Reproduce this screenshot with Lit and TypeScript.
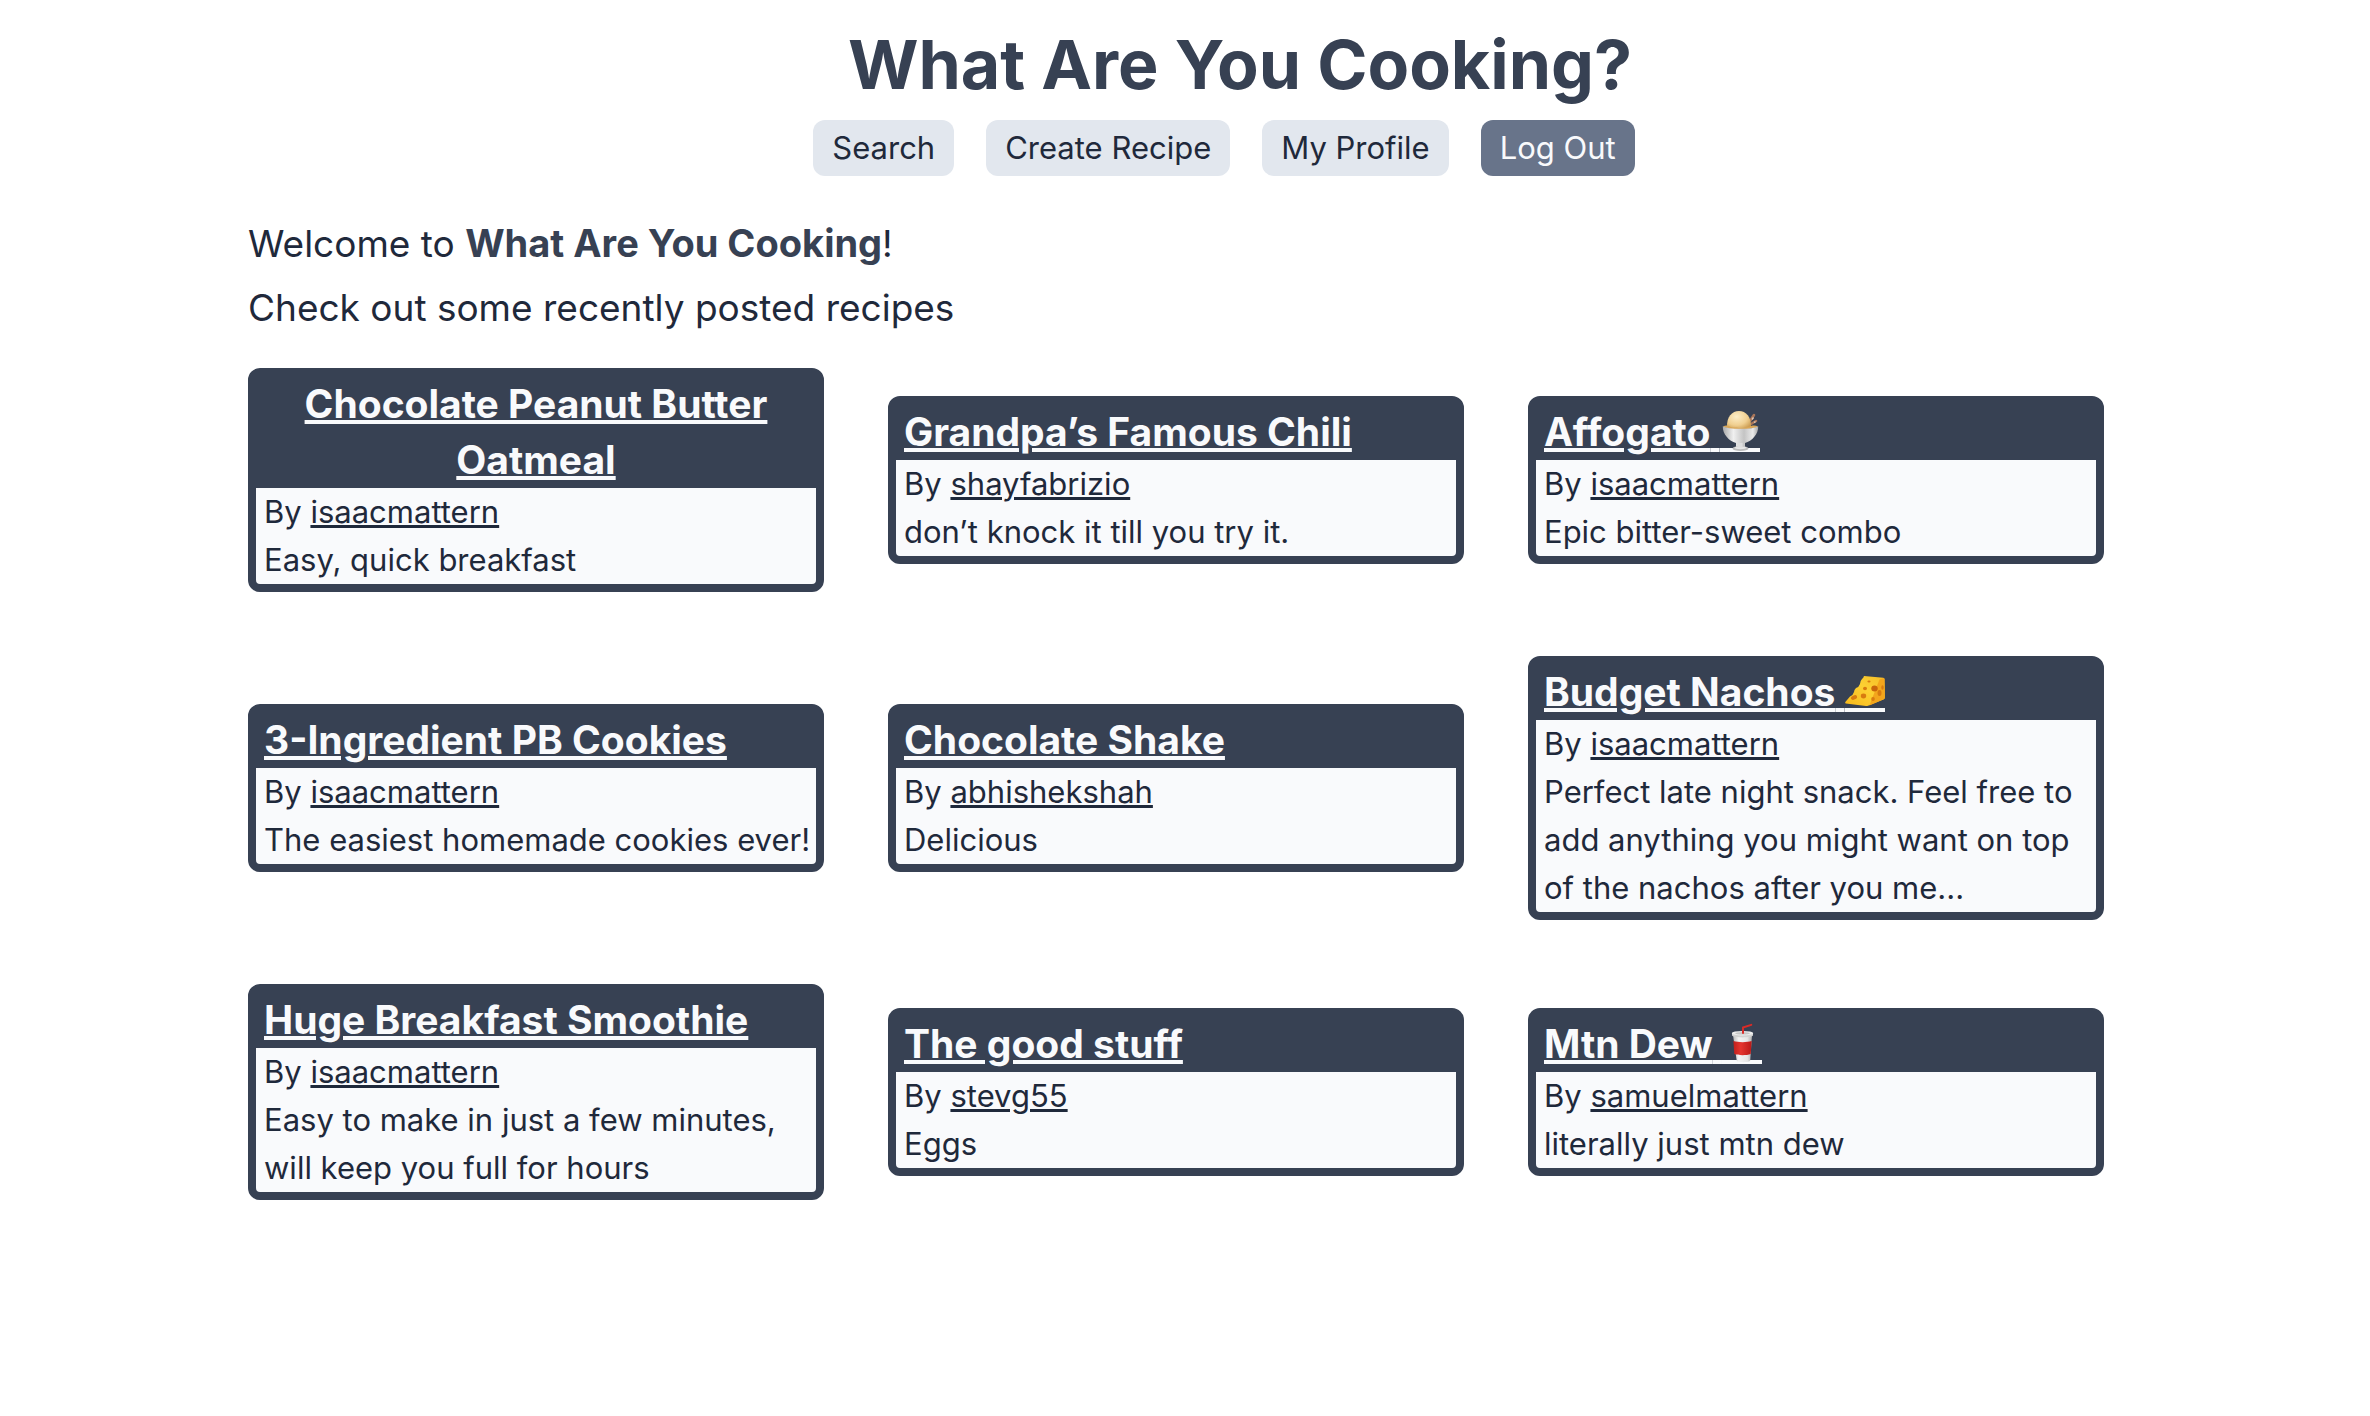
import { LitElement, html, css, svg, nothing } from "lit";
import { customElement, property } from "lit/decorators.js";

type EmojiName = "sundae" | "cheese" | "cup";

interface Recipe {
  title: string;
  author: string;
  description: string;
  emoji?: EmojiName;
}

const RECIPES: Recipe[] = [
  { title: "Chocolate Peanut Butter Oatmeal", author: "isaacmattern", description: "Easy, quick breakfast" },
  { title: "Grandpa’s Famous Chili", author: "shayfabrizio", description: "don’t knock it till you try it." },
  { title: "Affogato", author: "isaacmattern", description: "Epic bitter-sweet combo", emoji: "sundae" },
  { title: "3-Ingredient PB Cookies", author: "isaacmattern", description: "The easiest homemade cookies ever!" },
  { title: "Chocolate Shake", author: "abhishekshah", description: "Delicious" },
  {
    title: "Budget Nachos",
    author: "isaacmattern",
    description: "Perfect late night snack. Feel free to add anything you might want on top of the nachos after you me...",
    emoji: "cheese",
  },
  {
    title: "Huge Breakfast Smoothie",
    author: "isaacmattern",
    description: "Easy to make in just a few minutes, will keep you full for hours",
  },
  { title: "The good stuff", author: "stevg55", description: "Eggs" },
  { title: "Mtn Dew", author: "samuelmattern", description: "literally just mtn dew", emoji: "cup" },
];

const EMOJI = {
  sundae: svg`
    <defs>
      <radialGradient id="scoop" cx="0.4" cy="0.3" r="0.75">
        <stop offset="0" stop-color="#fdeec8"></stop>
        <stop offset="0.6" stop-color="#f0cf90"></stop>
        <stop offset="1" stop-color="#c9984c"></stop>
      </radialGradient>
      <linearGradient id="glass" x1="0" x2="1" y1="0" y2="0">
        <stop offset="0" stop-color="#a9a9a9"></stop>
        <stop offset="0.3" stop-color="#f0f0f0"></stop>
        <stop offset="0.6" stop-color="#c4c4c4"></stop>
        <stop offset="0.85" stop-color="#ebebeb"></stop>
        <stop offset="1" stop-color="#a5a5a5"></stop>
      </linearGradient>
    </defs>
    <path d="M30 9l4-6M31 12l5-3" stroke="#a9765a" stroke-width="2.6" stroke-linecap="round"></path>
    <path d="M32 7.500l1.500-2M34 10.500l1.500-.8" stroke="#e6c9b4" stroke-width="1.400"></path>
    <path d="M7 15C6.500 5 12-1 19-1S31.500 5 31 15c-1 4-23 4-24 0z" fill="url(#scoop)"></path>
    <path d="M3 14.500c2-1 4-1.200 6-.5 3 2.500 7 1 10 2s8-1 12-2c3-.7 5-.4 7 .5-4 3.500-31 3.500-35 0z" fill="#d9a657"></path>
    <path d="M2.800 14.200c4 3.400 31.500 3.400 35.400 0C38.500 22 32 29 25 31v4h-9v-4C9 29 2.500 22 2.800 14.200z" fill="url(#glass)"></path>
    <ellipse cx="20.500" cy="36.500" rx="8" ry="2.600" fill="#bdbdbd"></ellipse>
    <ellipse cx="20.500" cy="35.800" rx="6" ry="1.400" fill="#e6e6e6"></ellipse>
    <path d="M17.500 31h5v4.500h-5z" fill="#dedede"></path>`,
  cheese: svg`
    <defs>
      <linearGradient id="rind" x1="0" x2="1" y1="1" y2="0">
        <stop offset="0" stop-color="#f8b91c"></stop>
        <stop offset="0.55" stop-color="#fdd032"></stop>
        <stop offset="1" stop-color="#f4bd28"></stop>
      </linearGradient>
    </defs>
    <path d="M19 4l19.300 1.800q1 .2 1.100 1.200l.4 18.500q0 1-1 1.700L23 33.700q-1 .4-2 .3L.8 31.500q-1-.4-.5-1.500L5 24.500q3-1 4-4.500 0-2 2-4 3-1 4-4 0-3 2-5 1.500-1 2-3z" fill="url(#rind)"></path>
    <path d="M34.500 7.500l4.200-1.500.9.800.3 19.200-1 1.200-14.500 6.200z" fill="#f3a51c"></path>
    <g fill="#d87b10">
      <ellipse cx="9" cy="25.500" rx="3.200" ry="2" transform="rotate(-25 9 25.500)"></ellipse>
      <ellipse cx="18.500" cy="24" rx="2.700" ry="2.400"></ellipse>
      <ellipse cx="20" cy="16.500" rx="2" ry="1.700"></ellipse>
      <ellipse cx="24" cy="9.500" rx="1.600" ry="1"></ellipse>
      <ellipse cx="29.500" cy="16.500" rx="3.200" ry="3" fill="#c9650b"></ellipse>
      <ellipse cx="34.500" cy="21" rx="2" ry="3"></ellipse>
      <ellipse cx="37.500" cy="15.500" rx="1.200" ry="2.200"></ellipse>
      <ellipse cx="28" cy="27" rx="1.800" ry="2"></ellipse>
    </g>`,
  cup: svg`
    <defs>
      <linearGradient id="paper" x1="0" x2="1" y1="0" y2="0">
        <stop offset="0" stop-color="#b9b9b9"></stop>
        <stop offset="0.3" stop-color="#f4f4f4"></stop>
        <stop offset="0.75" stop-color="#e6e6e6"></stop>
        <stop offset="1" stop-color="#b0b0b0"></stop>
      </linearGradient>
      <linearGradient id="band" x1="0" x2="1" y1="0" y2="0">
        <stop offset="0" stop-color="#c01f1c"></stop>
        <stop offset="0.4" stop-color="#e5352f"></stop>
        <stop offset="1" stop-color="#b91a18"></stop>
      </linearGradient>
    </defs>
    <path d="M11 11h19l-1.800 25.500c-.5 2.200-13 2.200-13.500 0z" fill="url(#paper)"></path>
    <path d="M11.400 17c5 1.500 13.500 1.500 18.300 0l-1 13c-4 1.600-12.400 1.600-16.400 0z" fill="url(#band)"></path>
    <path d="M10 9v2.500c2 2.500 19 2.500 21 0V9z" fill="#d2d2d2"></path>
    <ellipse cx="20.500" cy="9.200" rx="10.700" ry="2.300" fill="#eeeeee"></ellipse>
    <ellipse cx="20.500" cy="9.300" rx="7.500" ry="1.200" fill="#c6c6c6"></ellipse>
    <path d="M21 9V3.500l8.300-2.600" fill="none" stroke="#d92b27" stroke-width="2" stroke-linejoin="round" stroke-linecap="round"></path>`,
};

const EMOJI_LABEL: Record<EmojiName, string> = { sundae: "ice cream", cheese: "cheese", cup: "cup with straw" };

@customElement("recipe-card")
export class RecipeCard extends LitElement {
  @property({ attribute: false }) recipe!: Recipe;

  static styles = css`
    :host {
      display: block;
    }
    .card {
      border: 8px solid #374153;
      border-radius: 12px;
      background: #f9fafc;
      color: #1f293b;
    }
    .title {
      margin: 0;
      padding: 0 8px;
      display: flex;
      background: #374153;
      font-size: 39px;
      line-height: 56px;
      font-weight: 700;
      text-align: center;
    }
    .title-link {
      color: #f9fafc;
      text-decoration-line: underline;
      text-decoration-thickness: 4px;
      text-underline-offset: 2px;
    }
    .emoji {
      width: 40px;
      height: 40px;
      overflow: visible;
      vertical-align: -6px;
    }
    .body {
      padding-left: 8px;
      font-size: 31px;
      line-height: 48px;
    }
    .line {
      margin: 0;
    }
    .author {
      color: inherit;
      text-decoration-thickness: 3px;
      text-underline-offset: 2px;
    }
  `;

  render() {
    const { title, author, description, emoji } = this.recipe;
    return html`<article class="card">
      <h2 class="title">
        <a class="title-link" href="#recipe">${title}${emoji
          ? html`&nbsp;<svg class="emoji" viewBox="0 0 40 40" role="img" aria-label=${EMOJI_LABEL[emoji]}>
                <rect y="36" width="40" height="4" fill="#f9fafc"></rect>
                ${EMOJI[emoji]}
              </svg>`
          : nothing}</a>
      </h2>
      <div class="body">
        <p class="line">By <a class="author" href="#profile">${author}</a></p>
        <p class="line">${description}</p>
      </div>
    </article>`;
  }
}

@customElement("app-root")
export class AppRoot extends LitElement {
  static styles = css`
    :host {
      display: block;
      padding: 24px 18px 64px 0;
      background: #ffffff;
      color: #1f293b;
      font-family: Inter, "Liberation Sans", sans-serif;
    }
    .header {
      display: flex;
      flex-direction: column;
      align-items: center;
      gap: 16px;
    }
    .brand {
      margin: 0;
      padding-left: 128px;
      color: #374153;
      font-size: 68px;
      line-height: 80px;
      font-weight: 700;
    }
    .nav {
      display: flex;
      gap: 32px;
      padding-left: 96px;
    }
    .pill {
      border: 0;
      border-radius: 12px;
      padding: 4px 19px;
      background: #e2e7ee;
      color: #1f293b;
      font: inherit;
      font-size: 31px;
      line-height: 48px;
      text-decoration: none;
    }
    .pill-dark {
      background: #68748a;
      color: #f9fafc;
    }
    .content {
      max-width: 1856px;
      margin: 40px auto 0;
    }
    .intro {
      margin: 0 0 8px;
      font-size: 37px;
      line-height: 56px;
    }
    .name {
      color: #374153;
      font-size: 38px;
      line-height: 1;
      font-weight: 700;
    }
    .recipes {
      margin-top: 32px;
      display: grid;
      grid-template-columns: repeat(3, minmax(0, 1fr));
      gap: 64px;
      align-items: center;
    }
  `;

  render() {
    return html`
      <header class="header">
        <h1 class="brand">What Are You Cooking?</h1>
        <nav class="nav" aria-label="Main">
          <a class="pill" href="#search">Search</a>
          <a class="pill" href="#create">Create Recipe</a>
          <a class="pill" href="#profile">My Profile</a>
          <button class="pill pill-dark" type="button">Log Out</button>
        </nav>
      </header>
      <main class="content">
        <p class="intro">Welcome to <strong class="name">What Are You Cooking</strong>!</p>
        <p class="intro">Check out some recently posted recipes</p>
        <section class="recipes" aria-label="Recent recipes">
          ${RECIPES.map((recipe) => html`<recipe-card .recipe=${recipe}></recipe-card>`)}
        </section>
      </main>
    `;
  }
}
